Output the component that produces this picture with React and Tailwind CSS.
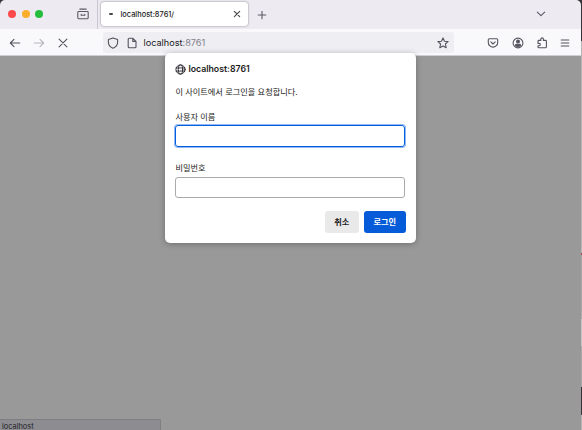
const stroke = { fill: 'none', stroke: 'currentColor', strokeLinecap: 'round', strokeLinejoin: 'round' };

function Icon({ className = '', width = 1.1, size = 16, children }) {
  return (
    <svg viewBox={`0 0 ${size} ${size}`} className={`shrink-0 ${className}`} strokeWidth={width} {...stroke}>
      {children}
    </svg>
  );
}

function TabBar() {
  return (
    <div className="flex h-[29px] shrink-0 items-start bg-[#edebf1] text-[#5b5965]">
      <div className="mt-[10px] ml-2 flex gap-[5.5px]">
        <span className="size-2 rounded-full bg-[#fb4a4b]" />
        <span className="size-2 rounded-full bg-[#fbad2c]" />
        <span className="size-2 rounded-full bg-[#25bd3c]" />
      </div>
      <Icon size={12} className="mt-2 ml-[34px] size-3">
        <path d="M2.8 1.1h6.4M1.7 3.5h8.6q.9 0 .9.9v5q0 1.4-1.4 1.4H2.2Q.8 10.8.8 9.4v-5q0-.9.9-.9zM4.2 6.2v1.1h3.6V6.2" />
      </Icon>
      <span className="ml-2 h-[29px] w-px bg-[#c9c7cf]" />
      <div className="mt-[2px] ml-[3px] flex h-6 w-[147px] items-center rounded-[3px] bg-white pr-[7px] pl-2 text-[#222] shadow-[0_0_2px_rgba(0,0,0,0.5)]">
        <span className="h-[2.5px] w-[3.5px] rounded-[1px] bg-[#48474d]" />
        <span className="ml-[8px] flex-1 pt-[2px] text-[7.4px] leading-none font-medium">localhost:8761/</span>
        <Icon size={8} className="size-2 text-[#444]">
          <path d="M1.3 1.3l5.4 5.4M6.7 1.3L1.3 6.7" />
        </Icon>
      </div>
      <Icon size={10} className="mt-[9.5px] ml-[9px] size-2.5">
        <path d="M5 1.2v7.6M1.2 5h7.6" />
      </Icon>
      <Icon size={10} className="mt-[9px] mr-[35px] ml-auto size-2.5">
        <path d="M1.3 3.1L5 6.7l3.7-3.6" />
      </Icon>
    </div>
  );
}

function Toolbar() {
  return (
    <div className="flex h-[27px] shrink-0 items-center border-b border-[#cfced3] bg-[#f9f9fb] pt-px text-[#55535e]">
      <Icon size={12} className="ml-[9px] size-3">
        <path d="M10.7 6H1.4M5 2.3L1.3 6 5 9.7" />
      </Icon>
      <Icon size={12} className="ml-3 size-3 text-[#b7b6bd]">
        <path d="M1.3 6h9.3M7 2.3L10.7 6 7 9.7" />
      </Icon>
      <Icon size={12} className="ml-3 size-3">
        <path d="M2.1 2.1l7.8 7.8M9.9 2.1L2.1 9.9" />
      </Icon>
      <div className="ml-[34px] flex h-[21px] w-[351px] items-center rounded-[3px] bg-[#efeef3]">
        <Icon size={12} className="ml-1 size-3">
          <path d="M6 .9l4.6 1.7v2.6c0 2.8-1.9 4.9-4.6 6-2.7-1.1-4.6-3.2-4.6-6V2.6z" />
        </Icon>
        <Icon size={12} className="ml-[7px] size-3">
          <path d="M3.2 1.3h3.7l3.1 3v5.4q0 1-1 1H3.2q-1 0-1-1V2.3q0-1 1-1zM6.8 1.5v2.9h3" />
        </Icon>
        <span className="ml-[5.5px] pt-px text-[9.15px] leading-none text-[#17161c]">
          localhost<span className="text-[#83828a]">:8761</span>
        </span>
        <Icon size={12} className="mr-[5px] ml-auto size-3">
          <path d="M6 .9l1.5 3.3 3.6.4-2.7 2.4.8 3.7L6 8.9l-3.2 1.8.8-3.7L.9 4.6l3.6-.4z" />
        </Icon>
      </div>
      <Icon size={12} className="ml-[33px] size-3">
        <path d="M2.3 1.8h7.4q1 0 1 1v2.6a4.7 4.7 0 0 1-9.4 0V2.8q0-1 1-1zM3.8 4.9L6 7l2.2-2.1" />
      </Icon>
      <Icon size={12} className="ml-[12.5px] size-3">
        <circle cx="6" cy="6" r="4.9" />
        <circle cx="6" cy="4.5" r="1.4" fill="currentColor" />
        <path d="M3.4 8.3q0-1 1-1h3.2q1 0 1 1Q7.7 9.4 6 9.4T3.4 8.3z" fill="currentColor" />
      </Icon>
      <Icon size={12} className="ml-[12px] size-3">
        <path d="M4.8 3.4V2.2a1.3 1.3 0 0 1 2.6 0v1.2h2.1q.9 0 .9.9v5.6q0 .9-.9.9H2.9q-.9 0-.9-.9V8.8h1.1a1.2 1.2 0 0 0 0-2.4H2V4.3q0-.9.9-.9z" />
      </Icon>
      <Icon size={12} className="ml-[11.5px] size-3">
        <path d="M2.2 3h7.6M2.2 6h7.6M2.2 9h7.6" />
      </Icon>
    </div>
  );
}

function LoginDialog() {
  return (
    <form
      onSubmit={(event) => event.preventDefault()}
      className="absolute top-[53px] left-[165px] flex h-[190px] w-[251px] flex-col rounded-[5px] bg-white px-[10.4px] text-[8.2px] font-medium text-[#1d1c22] shadow-[0_1px_6px_rgba(0,0,0,0.28)]"
    >
      <h1 className="mt-2.5 flex h-3 items-center gap-[2px] text-[8.75px] leading-3 font-semibold">
        <Icon size={12} width={0.95} className="size-[11px]">
          <circle cx="6" cy="6" r="5" />
          <ellipse cx="6" cy="6" rx="2.4" ry="5" />
          <path d="M1.3 4.3h9.4M1.3 7.7h9.4" />
        </Icon>
        localhost:8761
      </h1>
      <p className="mt-[11px] h-3 leading-[13px] font-normal whitespace-nowrap">이 사이트에서 로그인을 요청합니다.</p>
      <label htmlFor="user" className="mt-[13px] h-3 leading-3 font-normal">사용자 이름</label>
      <input id="user" className="mt-[2px] h-[22px] w-[230px] shrink-0 rounded-[3px] border-[1.5px] border-[#0560df] shadow-[0_0_0_1px_#8db8f0] outline-none" />
      <label htmlFor="password" className="mt-[15px] h-3 leading-[13px] font-normal">비밀번호</label>
      <input id="password" type="password" className="mt-[3px] h-[21px] w-[230px] shrink-0 rounded-[3px] border border-[#aaa9ad] outline-none" />
      <div className="mt-[13px] flex justify-end gap-[5.5px] font-semibold">
        <button className="h-[22px] w-[33.5px] rounded-[3px] bg-[#e9e9ea]">취소</button>
        <button className="h-[22px] w-[41.5px] rounded-[3px] bg-[#055bd8] text-white">로그인</button>
      </div>
    </form>
  );
}

export default function App() {
  return (
    <div className="relative flex h-[430px] w-[582px] overflow-hidden bg-[#353337] font-['Inter','Noto_Sans_CJK_KR',sans-serif]">
      <div className="flex w-[581px] flex-col overflow-hidden rounded-t-[5px]">
        <TabBar />
        <Toolbar />
        <main className="flex flex-1 items-end bg-[#99999a]">
          <div className="flex h-[11px] w-[161px] items-center rounded-tr-[2px] border-t border-r border-[#7e7d82] bg-[#8d8c91] pt-[4px] pl-[2px] text-[7.4px] leading-none text-[#222127]">
            localhost
          </div>
        </main>
      </div>
      <div className="flex w-px flex-col">
        <span className="mt-[41px] h-[212px] bg-[#b5b5b6]" />
        <span className="h-[2px] bg-[#a8455b]" />
        <span className="h-[64px] bg-[#a9a9aa]" />
        <span className="h-[27px] bg-[#c5c5c6]" />
        <span className="h-[41px] bg-[#a9a9aa]" />
        <span className="h-[28px] bg-[#353337]" />
        <span className="flex-1 bg-[#b5b5b6]" />
      </div>
      <LoginDialog />
    </div>
  );
}
